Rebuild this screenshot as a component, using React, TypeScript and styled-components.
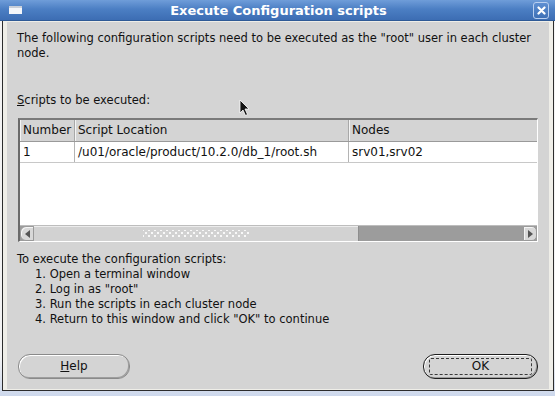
import React from "react";
import styled, { createGlobalStyle } from "styled-components";

const GlobalStyle = createGlobalStyle`
  html, body {
    margin: 0;
    padding: 0;
  }
  body {
    width: 555px;
    height: 396px;
    overflow: hidden;
    background: #dfe6f2;
    font-family: "DejaVu Sans", "Liberation Sans", sans-serif;
    color: #111;
  }
`;

const Desktop = styled.div`
  position: relative;
  width: 555px;
  height: 396px;
  display: flex;
  flex-direction: column;
  background: linear-gradient(180deg, #f3f3f3 0%, #f3f3f3 90%, #cdd8ec 100%);
`;

const TitleBar = styled.div`
  height: 20px;
  flex-shrink: 0;
  display: flex;
  align-items: center;
  padding: 0 6px 0 9px;
  background: linear-gradient(180deg, #6f9dd9 0%, #4c7fc4 45%, #3c6db3 100%);
  border-bottom: 1px solid #2f5a96;
`;

const WindowIcon = styled.div`
  width: 13px;
  height: 8px;
  background: #f4f6fa;
  border-top: 2px solid #c9cfd9;
  box-sizing: border-box;
`;

const Title = styled.div`
  flex: 1;
  text-align: center;
  color: #fff;
  font-weight: bold;
  font-size: 13px;
  padding-left: 2px;
`;

const CloseButton = styled.div`
  width: 14px;
  height: 15px;
  border: 1px solid #b9cff0;
  border-radius: 3px;
  background: linear-gradient(180deg, #5e8fd2, #3e70b6);
  display: flex;
  align-items: center;
  justify-content: center;
`;

const Frame = styled.div`
  flex: 1;
  display: flex;
  margin: 0 1px 5px 2px;
  padding: 1px 4px 1px 4px;
  background: #efeee8;
  border: 1px solid #2c2c2c;
  border-top: none;
`;

const Body = styled.div`
  flex: 1;
  display: flex;
  flex-direction: column;
  background: #d4d4d4;
  padding: 9px 10px 10px 10px;
  font-size: 11.5px;
  line-height: 15px;
`;

const Para = styled.p<{ $top?: number }>`
  margin: ${(p) => p.$top ?? 0}px 0 0 0;
`;

const Steps = styled.ol`
  margin: 0;
  padding: 0 0 0 18px;
  list-style: none;
`;

const Mnemonic = styled.span`
  text-decoration: underline;
`;

const TableBox = styled.div`
  margin: 10px 1px 0 1px;
  height: 121px;
  display: flex;
  flex-direction: column;
  border-style: solid;
  border-width: 2px 1px 1px 2px;
  border-color: #7a7a7a #ffffff #ffffff #6a6a6a;
  background: #fff;
`;

const Row = styled.div<{ $header?: boolean }>`
  display: grid;
  grid-template-columns: 55px 274px 1fr;
  height: ${(p) => (p.$header ? 21 : 20)}px;
  background: ${(p) => (p.$header ? "#d4d4d4" : "#fff")};
  border-bottom: 1px solid ${(p) => (p.$header ? "#9a9a9a" : "#c8c8c8")};
  font-size: 12px;
`;

const Cell = styled.div<{ $header?: boolean }>`
  display: flex;
  align-items: center;
  padding-left: 3px;
  border-right: 1px solid ${(p) => (p.$header ? "#a8a8a8" : "#b4b4b4")};
  box-shadow: ${(p) => (p.$header ? "inset 1px 0 0 #f4f4f4" : "none")};
  white-space: nowrap;
  &:last-child {
    border-right: none;
  }
`;

const Blank = styled.div`
  flex: 1;
`;

const ScrollBar = styled.div`
  height: 15px;
  display: flex;
  background: #9c9c9c;
  border-top: 1px solid #bdbdbd;
`;

const ArrowButton = styled.div<{ $side: "left" | "right" }>`
  width: 14px;
  display: flex;
  align-items: center;
  justify-content: center;
  background: #d8d8d8;
  border: 1px solid #9a9a9a;
  box-sizing: border-box;
  border-radius: ${(p) => (p.$side === "left" ? "6px 0 0 6px" : "0 5px 5px 0")};
  box-shadow: inset 1px 1px 0 #f4f4f4;
`;

const Thumb = styled.div`
  width: 324px;
  display: flex;
  align-items: center;
  justify-content: center;
  background: #d2d2d2;
  border-right: 1px solid #8e8e8e;
  box-shadow: inset 0 1px 0 #ececec;
`;

const Grip = styled.div`
  width: 106px;
  height: 7px;
  background-image: radial-gradient(circle, #f8f8f8 0.9px, transparent 1.3px),
    radial-gradient(circle, #f8f8f8 0.9px, transparent 1.3px);
  background-size: 6px 6px, 6px 6px;
  background-position: 0 0, 3px 3px;
`;

const Track = styled.div`
  flex: 1;
`;

const ButtonRow = styled.div`
  margin-top: auto;
  padding: 0 1px;
  display: flex;
  justify-content: space-between;
`;

const PillButton = styled.div<{ $default?: boolean }>`
  position: relative;
  width: ${(p) => (p.$default ? 115 : 112)}px;
  height: 25px;
  box-sizing: border-box;
  border-radius: 12px;
  border: 1px solid ${(p) => (p.$default ? "#1e1e1e" : "#8a8a8a")};
  background: #d4d4d4;
  box-shadow: inset 1px 1px 0 #ffffff, inset -1px -1px 0 #9e9e9e;
  display: flex;
  align-items: center;
  justify-content: center;
  font-size: 12px;
`;

const FocusRing = styled.div`
  position: absolute;
  inset: 3px 5px 3px 5px;
  border: 1px dashed #3a3a3a;
  border-radius: 2px;
`;

const Cursor = styled.svg`
  position: absolute;
  left: 239px;
  top: 99px;
`;

const steps = [
  "Open a terminal window",
  'Log in as "root"',
  "Run the scripts in each cluster node",
  'Return to this window and click "OK" to continue',
];

export default function App() {
  return (
    <>
      <GlobalStyle />
      <Desktop>
        <TitleBar>
          <WindowIcon />
          <Title>Execute Configuration scripts</Title>
          <CloseButton>
            <svg width="9" height="9" viewBox="0 0 9 9">
              <path d="M1.5 1.5 L7.5 7.5 M7.5 1.5 L1.5 7.5" stroke="#fff" strokeWidth="2.2" strokeLinecap="round" />
            </svg>
          </CloseButton>
        </TitleBar>

        <Frame>
          <Body>
            <Para>
              The following configuration scripts need to be executed as the "root" user in each cluster
              <br />
              node.
            </Para>

            <Para $top={32}>
              <Mnemonic>S</Mnemonic>cripts to be executed:
            </Para>

            <TableBox>
              <Row $header>
                <Cell $header>Number</Cell>
                <Cell $header>Script Location</Cell>
                <Cell $header>Nodes</Cell>
              </Row>
              <Row>
                <Cell>1</Cell>
                <Cell>/u01/oracle/product/10.2.0/db_1/root.sh</Cell>
                <Cell>srv01,srv02</Cell>
              </Row>
              <Blank />
              <ScrollBar>
                <ArrowButton $side="left">
                  <svg width="5" height="8" viewBox="0 0 5 8">
                    <path d="M5 0 L0 4 L5 8 Z" fill="#555" />
                  </svg>
                </ArrowButton>
                <Thumb>
                  <Grip />
                </Thumb>
                <Track />
                <ArrowButton $side="right">
                  <svg width="5" height="8" viewBox="0 0 5 8">
                    <path d="M0 0 L5 4 L0 8 Z" fill="#555" />
                  </svg>
                </ArrowButton>
              </ScrollBar>
            </TableBox>

            <Para $top={10}>To execute the configuration scripts:</Para>
            <Steps>
              {steps.map((s, i) => (
                <li key={i}>
                  {i + 1}. {s}
                </li>
              ))}
            </Steps>

            <ButtonRow>
              <PillButton>
                <span>
                  <Mnemonic>H</Mnemonic>elp
                </span>
              </PillButton>
              <PillButton $default>
                <FocusRing />
                <span>OK</span>
              </PillButton>
            </ButtonRow>
          </Body>
        </Frame>

        <Cursor width="11" height="18" viewBox="0 0 11 18">
          <path d="M1 1 L1 14 L4 11 L6.5 16.5 L8.5 15.5 L6 10 L10 10 Z" fill="#111" stroke="#fff" strokeWidth="0.8" />
        </Cursor>
      </Desktop>
    </>
  );
}
